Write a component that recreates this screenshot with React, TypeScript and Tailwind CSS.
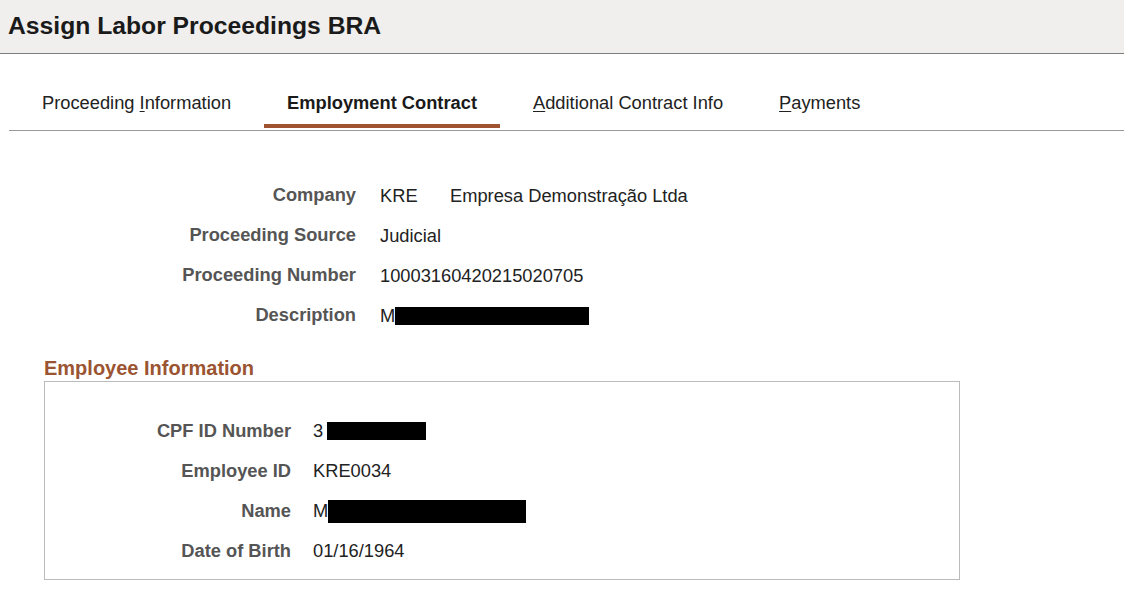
import React from "react";

const font = { fontFamily: '"Liberation Sans", Arial, sans-serif' };

function Redacted({ w, h, className = "" }: { w: string; h: string; className?: string }) {
  return <span className={`inline-block bg-black align-middle ${w} ${h} ${className}`} />;
}

function Tab({ children, active }: { children: React.ReactNode; active?: boolean }) {
  return (
    <div className="flex flex-col px-[23px]">
      <div
        className={`h-[42px] flex items-center text-[18.3px] whitespace-nowrap ${
          active ? "font-bold text-[#1a1a1a]" : "text-[#222]"
        }`}
      >
        <span>{children}</span>
      </div>
      <div className={`h-[4px] -mx-[23px] ${active ? "bg-[#9f5331]" : ""}`} />
      <div className="h-[2px]" />
    </div>
  );
}

function Row({
  label,
  labelWidth,
  gap,
  lift = "",
  children,
}: {
  label: string;
  labelWidth: string;
  gap: string;
  lift?: string;
  children: React.ReactNode;
}) {
  return (
    <div className="flex h-[40px] items-center">
      <div className={`${labelWidth} text-right font-bold text-[18.3px] text-[#555] ${lift}`}>{label}</div>
      <div className={`${gap} text-[18.3px] text-[#222] flex items-center`}>{children}</div>
    </div>
  );
}

export default function App() {
  return (
    <div className="w-[1124px] h-[600px] bg-white overflow-hidden" style={font}>
      <div className="h-[54px] bg-[#f0efed] border-b border-[#7d7d7d] flex items-center pl-[8px]">
        <h1 className="text-[24.7px] font-bold text-[#1a1a1a] -mt-[2px]">Assign Labor Proceedings BRA</h1>
      </div>

      <div className="mt-[28px] ml-[9px] flex gap-[10px] border-b border-[#999] pl-[10px]">
        <Tab>
          Proceeding <span className="underline underline-offset-2">I</span>nformation
        </Tab>
        <Tab active>Employment Contract</Tab>
        <Tab>
          <span className="underline underline-offset-2">A</span>dditional Contract Info
        </Tab>
        <Tab>
          <span className="underline underline-offset-2">P</span>ayments
        </Tab>
      </div>

      <div className="mt-[45px]">
        <Row label="Company" labelWidth="w-[356px]" gap="ml-[24px]" lift="-mt-[3px]">
          <span className="w-[70px]">KRE</span>
          <span>Empresa Demonstração Ltda</span>
        </Row>
        <Row label="Proceeding Source" labelWidth="w-[356px]" gap="ml-[24px]" lift="-mt-[3px]">
          Judicial
        </Row>
        <Row label="Proceeding Number" labelWidth="w-[356px]" gap="ml-[24px]" lift="-mt-[3px]">
          10003160420215020705
        </Row>
        <Row label="Description" labelWidth="w-[356px]" gap="ml-[24px]" lift="-mt-[3px]">
          <span>M</span>
          <Redacted w="w-[194px]" h="h-[18px]" />
        </Row>
      </div>

      <div className="ml-[44px] mt-[21px]">
        <h2 className="text-[20px] font-bold text-[#9b5431] leading-[23px]">Employee Information</h2>
        <div className="mt-[1px] w-[916px] h-[199px] border border-[#bbb] pt-[29px]">
          <Row label="CPF ID Number" labelWidth="w-[246px]" gap="ml-[22px]">
            <span>3</span>
            <Redacted w="w-[99px]" h="h-[18px]" className="ml-[4px]" />
          </Row>
          <Row label="Employee ID" labelWidth="w-[246px]" gap="ml-[22px]">
            KRE0034
          </Row>
          <Row label="Name" labelWidth="w-[246px]" gap="ml-[22px]">
            <span>M</span>
            <Redacted w="w-[198px]" h="h-[23px]" />
          </Row>
          <Row label="Date of Birth" labelWidth="w-[246px]" gap="ml-[22px]">
            01/16/1964
          </Row>
        </div>
      </div>
    </div>
  );
}
